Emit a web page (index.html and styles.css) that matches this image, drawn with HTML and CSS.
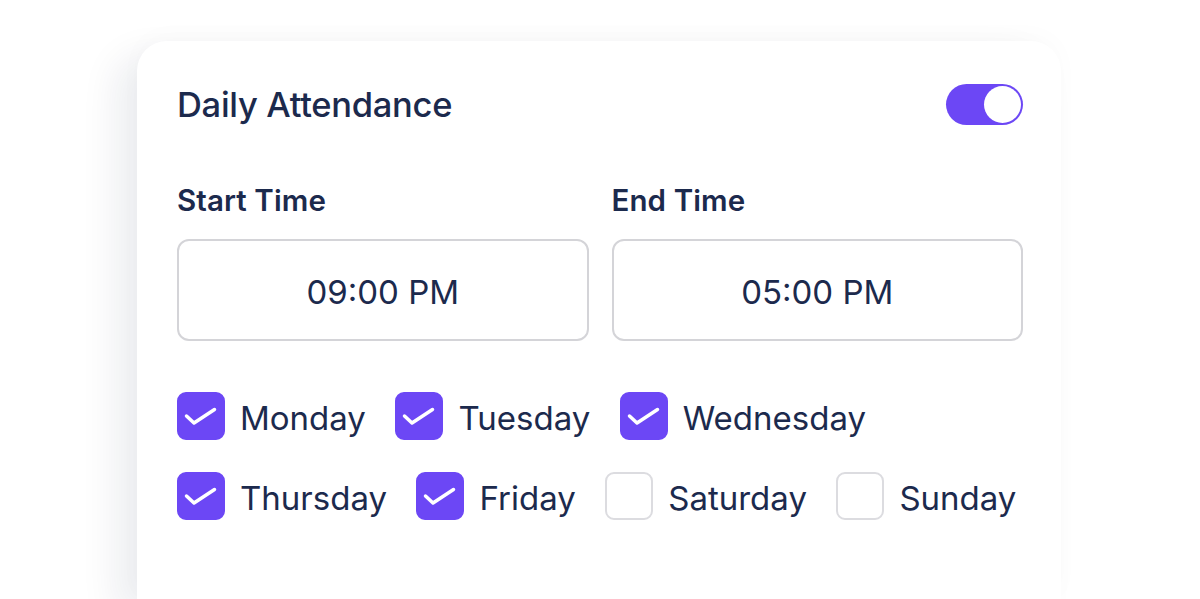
FILE: index.html
```html
<!DOCTYPE html>
<html>
<head>
<meta charset="utf-8">
<link rel="stylesheet" href="styles.css">
</head>
<body>
<div class="page">
  <div class="card">
    <div class="head">
      <h1 class="title">Daily Attendance</h1>
      <div class="toggle"><div class="knob"></div></div>
    </div>
    <div class="times">
      <div class="field">
        <div class="label">Start Time</div>
        <div class="input">09:00 PM</div>
      </div>
      <div class="field">
        <div class="label">End Time</div>
        <div class="input">05:00 PM</div>
      </div>
    </div>
    <div class="days">
      <div class="row">
        <label class="day"><span class="box on"><svg viewBox="0 0 48 48"><path d="M9.5 24 L17 31 L37.5 17.5"/></svg></span>Monday</label>
        <label class="day"><span class="box on"><svg viewBox="0 0 48 48"><path d="M9.5 24 L17 31 L37.5 17.5"/></svg></span>Tuesday</label>
        <label class="day"><span class="box on"><svg viewBox="0 0 48 48"><path d="M9.5 24 L17 31 L37.5 17.5"/></svg></span>Wednesday</label>
      </div>
      <div class="row">
        <label class="day"><span class="box on"><svg viewBox="0 0 48 48"><path d="M9.5 24 L17 31 L37.5 17.5"/></svg></span>Thursday</label>
        <label class="day"><span class="box on"><svg viewBox="0 0 48 48"><path d="M9.5 24 L17 31 L37.5 17.5"/></svg></span>Friday</label>
        <label class="day"><span class="box"></span>Saturday</label>
        <label class="day"><span class="box"></span>Sunday</label>
      </div>
    </div>
  </div>
</div>
</body>
</html>
```

FILE: styles.css
```css
* { box-sizing: border-box; }
html, body { margin: 0; padding: 0; background: #ffffff; }
body {
  width: 1200px;
  height: 599px;
  overflow: hidden;
  font-family: Inter, "Noto Sans", sans-serif;
  color: #1c2a4d;
}
.page {
  padding: 41px 0 0 137px;
}
.card {
  width: 924px;
  height: 558px;
  background: #fff;
  border-radius: 30px 30px 0 0;
  box-shadow: -22px 14px 36px rgba(20, 30, 70, 0.075), 0 -6px 24px rgba(20, 30, 70, 0.02);
  padding: 41px 38px 0 40px;
}
.head {
  display: flex;
  justify-content: space-between;
  align-items: center;
  width: 846px;
  height: 45px;
}
.title {
  margin: 0;
  font-size: 34.5px;
  font-weight: 500;
  letter-spacing: -0.3px;
  color: #1c2a4d;
}
.toggle {
  width: 77px;
  height: 41px;
  border-radius: 21px;
  background: #6c47f5;
  display: flex;
  justify-content: flex-end;
  align-items: center;
  padding: 2px;
}
.knob {
  width: 37px;
  height: 37px;
  border-radius: 50%;
  background: #fff;
}
.times {
  display: flex;
  gap: 23px;
  margin-top: 56px;
}
.field { width: 412px; }
.label {
  font-size: 29.5px;
  font-weight: 600;
  line-height: 34px;
  letter-spacing: 0.1px;
  color: #1c2a4d;
}
.input {
  margin-top: 22px;
  height: 102px;
  border: 2px solid #d4d4d8;
  border-radius: 12px;
  display: flex;
  align-items: center;
  justify-content: center;
  font-size: 33px;
  font-weight: 400;
  color: #1c2a4d;
  padding-top: 4px;
}
.days {
  margin-top: 51px;
  display: flex;
  flex-direction: column;
  gap: 32px;
}
.row {
  display: flex;
  gap: 29.5px;
}
.day {
  display: flex;
  align-items: center;
  gap: 15px;
  font-size: 33px;
  font-weight: 400;
  color: #1c2a4d;
  height: 48px;
  padding-top: 4px;
}
.box {
  width: 48px;
  height: 48px;
  margin-top: -4px;
  border-radius: 9px;
  border: 2px solid #dcdce0;
  background: #fff;
  display: flex;
}
.box.on {
  background: #6c47f5;
  border-color: #6c47f5;
}
.box svg {
  width: 48px;
  height: 48px;
  margin: -2px;
}
.box svg path {
  fill: none;
  stroke: #fff;
  stroke-width: 3.5;
  stroke-linecap: round;
  stroke-linejoin: round;
}
```
